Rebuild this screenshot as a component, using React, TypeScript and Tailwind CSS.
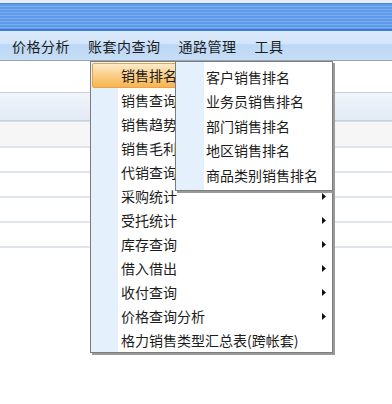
// 报表系统主窗口：顶部标题条 + 菜单栏，"账套内查询"下拉菜单展开，"销售排名"子菜单弹出。
const menuBar = ["价格分析", "账套内查询", "通路管理", "工具"];

const mainItems: { label: string; sub?: boolean }[] = [
  { label: "销售排名", sub: true },
  { label: "销售查询", sub: true },
  { label: "销售趋势", sub: true },
  { label: "销售毛利", sub: true },
  { label: "代销查询", sub: true },
  { label: "采购统计", sub: true },
  { label: "受托统计", sub: true },
  { label: "库存查询", sub: true },
  { label: "借入借出", sub: true },
  { label: "收付查询", sub: true },
  { label: "价格查询分析", sub: true },
  { label: "格力销售类型汇总表(跨帐套)" },
];

const rankItems = ["客户销售排名", "业务员销售排名", "部门销售排名", "地区销售排名", "商品类别销售排名"];

function Arrow() {
  return (
    <svg width="4" height="7" viewBox="0 0 4 7" className="absolute right-[6px] top-[9px]">
      <path d="M0 0 L4 3.5 L0 7 Z" fill="#111" />
    </svg>
  );
}

export default function App() {
  return (
    <div
      className="relative h-[404px] w-[392px] overflow-hidden bg-white text-[14px] text-[#1c1c1c]"
      style={{ fontFamily: '"Noto Sans CJK SC", "Noto Sans", sans-serif' }}
    >
      {/* 标题条 */}
      <div className="h-[3px] bg-[#e6edf7]" />
      <div className="h-[28px] border-t border-[#4a86dc] border-b-2 border-b-[#3f7bd6] bg-[repeating-linear-gradient(180deg,#5d9bea_0px,#5d9bea_2px,#78aef0_2px,#78aef0_3px)]" />

      {/* 菜单栏 */}
      <div className="flex h-[30px] items-center gap-[18px] border-b border-[#9aa4b0] bg-[linear-gradient(180deg,#dceafa_0%,#d2e5fa_45%,#bcd8f6_47%,#c6ddf5_100%)] pl-[12px] leading-none">
        {menuBar.map((m) => (
          <span key={m} className="tracking-[0.5px]">
            {m}
          </span>
        ))}
      </div>

      {/* 背景表格 */}
      <div className="h-[31px]" />
      <div className="h-[29px] border-y border-[#c6d0dd] bg-[linear-gradient(180deg,#f1f5fb,#e2eaf5)]" />
      <div className="h-[25px] border-t border-[#d6dde6] bg-[#f6f6f6]" />
      {[0, 1, 2, 3, 4].map((i) => (
        <div key={i} className="h-[25px] border-t-2 border-[#e0e5eb]" />
      ))}

      {/* 下拉菜单 */}
      <div className="absolute left-[90px] top-[61px] h-[292px] w-[243px] border border-[#7c7c7c] bg-white shadow-[2px_2px_0_#9a9a9a]">
        <div className="absolute bottom-0 left-0 top-0 w-[27px] bg-[#e4f0fc]" />
        <div className="relative pt-[1px]">
          {mainItems.map((it, i) => (
            <div
              key={it.label}
              className={
                i === 0
                  ? "relative ml-[1px] flex h-[25px] items-center rounded-[2px] border border-[#e5a54e] bg-[linear-gradient(180deg,#fdebc9_0%,#fad08c_45%,#f6b54e_100%)] pl-[28px]"
                  : "relative flex h-[24px] items-center pl-[30px]"
              }
            >
              {it.label}
              {it.sub && <Arrow />}
            </div>
          ))}
        </div>
      </div>

      {/* 销售排名 子菜单 */}
      <div className="absolute left-[175px] top-[61px] h-[130px] w-[158px] border border-[#7c7c7c] bg-white shadow-[2px_2px_0_#9a9a9a]">
        <div className="absolute bottom-0 left-0 top-0 w-[28px] bg-[#e4f0fc]" />
        <div className="relative pt-[3px]">
          {rankItems.map((r) => (
            <div key={r} className="flex h-[24.5px] items-center pl-[30px]">
              {r}
            </div>
          ))}
        </div>
      </div>
    </div>
  );
}
